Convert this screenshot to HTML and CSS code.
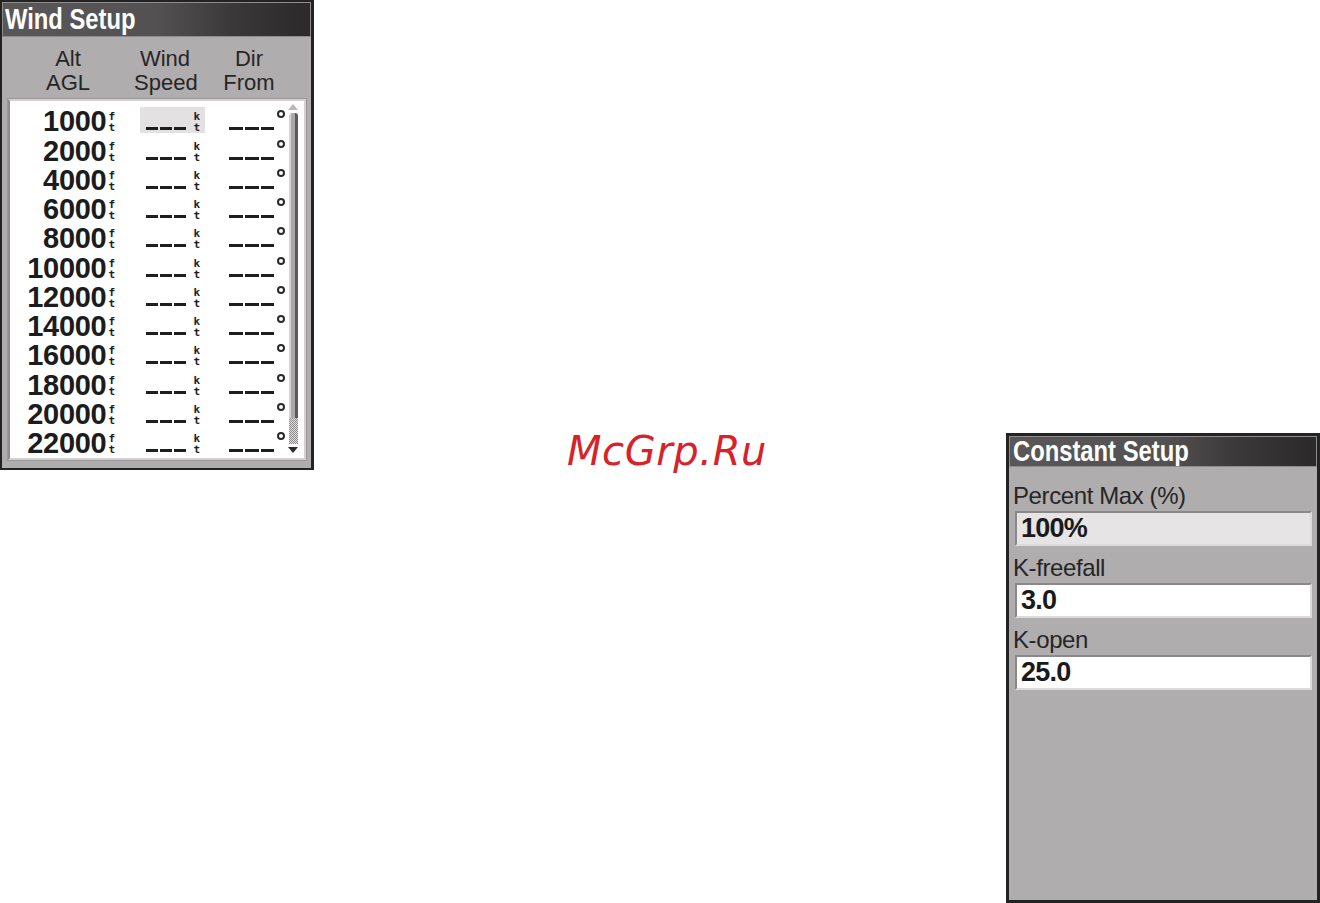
FILE: index.html
```html
<html lang="en">

<head>
    <meta charset="UTF-8">
    <meta name="viewport" content="width=device-width, initial-scale=1.0">
    <title>Wind Setup / Constant Setup</title>
    <link rel="stylesheet" href="styles.css">
</head>

<body>
    <div class="page">
        <div class="panel wind">
            <div class="titlebar"><span class="title-text">Wind Setup</span></div>

            <div class="wind-head">
                <div class="col-alt">Alt<br>AGL</div>
                <div class="col-speed">Wind<br>Speed</div>
                <div class="col-dir">Dir<br>From</div>
            </div>

            <div class="listbox">
                <div class="rows">
                    <div class="row">
                        <span class="alt">1000<span class="unit"><i>f</i><i>t</i></span></span>
                        <span class="speed selected"><span class="dash"></span><span class="unit"><i>k</i><i>t</i></span></span>
                        <span class="dir"><span class="dash"></span><span class="deg"></span></span>
                    </div>
                    <div class="row">
                        <span class="alt">2000<span class="unit"><i>f</i><i>t</i></span></span>
                        <span class="speed"><span class="dash"></span><span class="unit"><i>k</i><i>t</i></span></span>
                        <span class="dir"><span class="dash"></span><span class="deg"></span></span>
                    </div>
                    <div class="row">
                        <span class="alt">4000<span class="unit"><i>f</i><i>t</i></span></span>
                        <span class="speed"><span class="dash"></span><span class="unit"><i>k</i><i>t</i></span></span>
                        <span class="dir"><span class="dash"></span><span class="deg"></span></span>
                    </div>
                    <div class="row">
                        <span class="alt">6000<span class="unit"><i>f</i><i>t</i></span></span>
                        <span class="speed"><span class="dash"></span><span class="unit"><i>k</i><i>t</i></span></span>
                        <span class="dir"><span class="dash"></span><span class="deg"></span></span>
                    </div>
                    <div class="row">
                        <span class="alt">8000<span class="unit"><i>f</i><i>t</i></span></span>
                        <span class="speed"><span class="dash"></span><span class="unit"><i>k</i><i>t</i></span></span>
                        <span class="dir"><span class="dash"></span><span class="deg"></span></span>
                    </div>
                    <div class="row">
                        <span class="alt">10000<span class="unit"><i>f</i><i>t</i></span></span>
                        <span class="speed"><span class="dash"></span><span class="unit"><i>k</i><i>t</i></span></span>
                        <span class="dir"><span class="dash"></span><span class="deg"></span></span>
                    </div>
                    <div class="row">
                        <span class="alt">12000<span class="unit"><i>f</i><i>t</i></span></span>
                        <span class="speed"><span class="dash"></span><span class="unit"><i>k</i><i>t</i></span></span>
                        <span class="dir"><span class="dash"></span><span class="deg"></span></span>
                    </div>
                    <div class="row">
                        <span class="alt">14000<span class="unit"><i>f</i><i>t</i></span></span>
                        <span class="speed"><span class="dash"></span><span class="unit"><i>k</i><i>t</i></span></span>
                        <span class="dir"><span class="dash"></span><span class="deg"></span></span>
                    </div>
                    <div class="row">
                        <span class="alt">16000<span class="unit"><i>f</i><i>t</i></span></span>
                        <span class="speed"><span class="dash"></span><span class="unit"><i>k</i><i>t</i></span></span>
                        <span class="dir"><span class="dash"></span><span class="deg"></span></span>
                    </div>
                    <div class="row">
                        <span class="alt">18000<span class="unit"><i>f</i><i>t</i></span></span>
                        <span class="speed"><span class="dash"></span><span class="unit"><i>k</i><i>t</i></span></span>
                        <span class="dir"><span class="dash"></span><span class="deg"></span></span>
                    </div>
                    <div class="row">
                        <span class="alt">20000<span class="unit"><i>f</i><i>t</i></span></span>
                        <span class="speed"><span class="dash"></span><span class="unit"><i>k</i><i>t</i></span></span>
                        <span class="dir"><span class="dash"></span><span class="deg"></span></span>
                    </div>
                    <div class="row">
                        <span class="alt">22000<span class="unit"><i>f</i><i>t</i></span></span>
                        <span class="speed"><span class="dash"></span><span class="unit"><i>k</i><i>t</i></span></span>
                        <span class="dir"><span class="dash"></span><span class="deg"></span></span>
                    </div>
                </div>

                <div class="scrollbar">
                    <span class="arrow-up"></span>
                    <span class="thumb"></span>
                    <span class="track-rest"></span>
                    <span class="arrow-down"></span>
                </div>
            </div>
        </div>

        <div class="brand">McGrp.Ru</div>

        <div class="panel constant">
            <div class="titlebar"><span class="title-text">Constant Setup</span></div>

            <div class="fields">
                <label class="field-label">Percent Max (%)</label>
                <div class="field active">100%</div>

                <label class="field-label">K-freefall</label>
                <div class="field">3.0</div>

                <label class="field-label">K-open</label>
                <div class="field">25.0</div>
            </div>
        </div>
    </div>
</body>
</html>
```

FILE: styles.css
```css
body {
    margin: 0;
    background-color: #fff;
    font-family: 'Liberation Sans', Arial, sans-serif;
    color: #1e1e1e;
}

.page {
    display: flex;
    align-items: flex-start;
    width: 1320px;
    height: 903px;
    overflow: hidden;
}

/* device screen frame */
.panel {
    box-sizing: border-box;
    width: 314px;
    height: 470px;
    background-color: #afadae;
    border: 3px solid #232323;
    display: flex;
    flex-direction: column;
}

.titlebar {
    height: 29px;
    border: 1px solid #8e8c8d;
    background: linear-gradient(90deg, #595758 0%, #535152 50%, #3a3839 75%, #2b292a 100%);
    padding-left: 3px;
    overflow: hidden;
    white-space: nowrap;
}

/* the device font is a narrow pixel face, so squeeze the bold sans */
.title-text {
    display: inline-block;
    color: #fff;
    font-weight: bold;
    font-size: 29px;
    line-height: 29px;
    transform: scaleX(0.82);
    transform-origin: left center;
}

/* ---------- wind setup ---------- */

.wind {
    border-width: 2px 3px 2px 2px;
}

.wind .titlebar {
    height: 33px;
    padding-left: 2px;
}

.wind .title-text {
    line-height: 33px;
}

.wind-head {
    display: flex;
    margin-top: 10px;
    font-size: 22px;
    line-height: 24px;
    text-align: center;
    color: #262626;
}

.col-alt {
    width: 132px;
}

.col-speed {
    width: 62px;
}

.col-dir {
    width: 106px;
}

.listbox {
    display: flex;
    box-sizing: border-box;
    width: 298px;
    height: 361px;
    margin: 4px 0 0 6px;
    background-color: #fff;
    border: 2px solid #d2d0d1;
    border-left-color: #8f8d8e;
    outline: 1px solid #9a9899;
}

.rows {
    flex: 1;
    padding-top: 3px;
}

.row {
    display: flex;
    align-items: flex-end;
    height: 29.25px;
}

.alt {
    display: flex;
    align-items: flex-end;
    justify-content: flex-end;
    width: 105px;
    font-weight: bold;
    font-size: 29px;
    line-height: 24px;
    letter-spacing: -0.3px;
    color: #1c1c1c;
}

.unit {
    display: flex;
    flex-direction: column;
    margin-left: 2px;
    font-size: 11px;
    line-height: 11px;
    letter-spacing: 0;
    font-weight: bold;
    font-family: 'DejaVu Sans Mono', monospace;
}

.unit i {
    font-style: normal;
}

.speed {
    display: flex;
    align-items: flex-end;
    justify-content: flex-end;
    box-sizing: border-box;
    width: 65px;
    height: 26px;
    margin-left: 25px;
    padding-right: 5px;
}

.speed.selected {
    background-color: #e3e1e2;
}

.speed .unit {
    margin-left: 7px;
}

.dash {
    display: block;
    width: 40px;
    height: 3px;
    margin-bottom: 3px;
    background: repeating-linear-gradient(90deg, #1e1e1e 0 12px, transparent 12px 14px);
}

.dir {
    display: flex;
    align-items: flex-start;
    justify-content: flex-end;
    box-sizing: border-box;
    width: 58px;
    height: 26px;
    margin-left: 22px;
    padding-top: 3px;
}

.dir .dash {
    width: 45px;
    align-self: flex-end;
    background: repeating-linear-gradient(90deg, #1e1e1e 0 14px, transparent 14px 16px);
}

.deg {
    width: 4px;
    height: 4px;
    margin-left: 3px;
    border: 2px solid #2a2a2a;
    border-radius: 50%;
}

.scrollbar {
    display: flex;
    flex-direction: column;
    align-items: center;
    width: 12px;
    margin-right: 5px;
    padding-top: 3px;
}

.arrow-up {
    width: 0;
    height: 0;
    border-left: 5px solid transparent;
    border-right: 5px solid transparent;
    border-bottom: 6px solid #b9b7b8;
}

.thumb {
    box-sizing: border-box;
    width: 9px;
    height: 305px;
    margin-top: 3px;
    background-color: #a9a7a8;
    border-left: 2px solid #d6d4d5;
    border-right: 3px solid #5c5a5b;
    border-radius: 3px 3px 0 0;
}

.track-rest {
    width: 9px;
    height: 26px;
    background-color: #c7c5c6;
    background-image: repeating-conic-gradient(#8f8d8e 0 25%, #dddbdc 0 50%);
    background-size: 2px 2px;
}

.arrow-down {
    width: 0;
    height: 0;
    margin-top: 3px;
    border-left: 5px solid transparent;
    border-right: 5px solid transparent;
    border-top: 6px solid #2a2a2a;
}

/* ---------- watermark ---------- */

.brand {
    margin: 427px 0 0 253px;
    font-family: 'DejaVu Sans', sans-serif;
    font-style: italic;
    font-size: 40px;
    line-height: 48px;
    letter-spacing: 0.6px;
    color: #d8222a;
    white-space: nowrap;
}

/* ---------- constant setup ---------- */

.constant {
    margin: 433px 0 0 auto;
}

.fields {
    display: flex;
    flex-direction: column;
    padding: 15px 5px 0 4px;
}

.field-label {
    height: 29px;
    font-size: 24px;
    line-height: 28px;
    letter-spacing: -0.4px;
    color: #262626;
}

.field {
    box-sizing: border-box;
    height: 35px;
    margin: 0 0 8px 2px;
    padding-left: 4px;
    background-color: #fff;
    border: 2px solid #dcdadb;
    border-top-color: #8a8889;
    border-left-color: #8a8889;
    font-weight: bold;
    font-size: 27px;
    line-height: 31px;
    letter-spacing: -0.8px;
    color: #1a1a1a;
}

.field.active {
    background-color: #e6e4e5;
}
```
